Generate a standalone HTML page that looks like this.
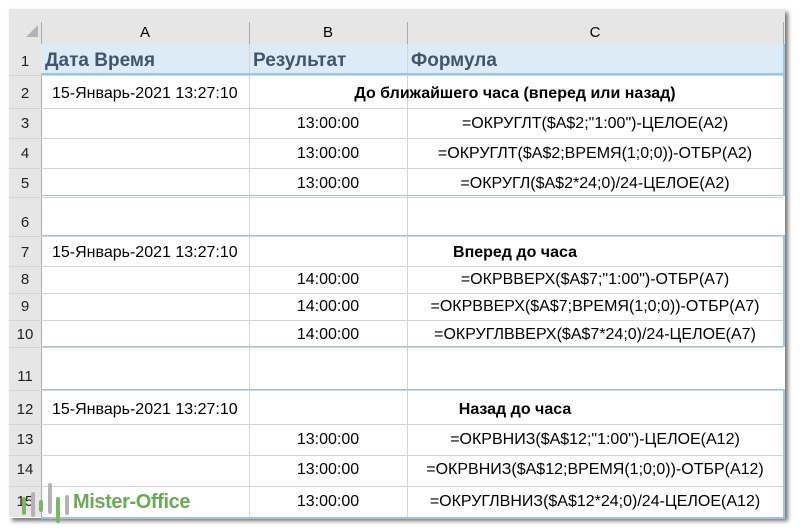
<!DOCTYPE html>
<html><head><meta charset="utf-8"><style>
body{margin:0;width:800px;height:531px;background:#fff;position:relative;overflow:hidden;font-family:"Liberation Sans",sans-serif;}
.frame{position:absolute;left:9px;top:9px;width:776px;height:509px;background:#fff;box-shadow:3px 3px 4px rgba(0,0,0,.55);}
.a{position:absolute;}
.hl{position:absolute;left:9px;width:774px;height:1px;background:#d4d4d4;}
.vl{position:absolute;top:44px;height:473px;width:1px;background:#d4d4d4;}
.rn{position:absolute;left:9px;width:32px;text-align:center;font-size:15px;color:#222;}
.t{position:absolute;font-size:16px;color:#000;white-space:nowrap;}
.c{text-align:center;}
.b{font-weight:bold;}
.blue{position:absolute;background:#9dc3e6;}
</style></head><body>
<div class="frame"></div>
<div class="a" style="left:9px;top:9px;width:776px;height:35px;background:#e6e6e6;border-bottom:1px solid #ababab"></div>
<div class="a" style="left:9px;top:44px;width:32px;height:473px;background:#e6e6e6;border-right:1px solid #ababab"></div>
<div class="a" style="left:26px;top:25px;width:0;height:0;border-left:12px solid transparent;border-bottom:12px solid #b4b4b4"></div>
<div class="a" style="left:41px;top:22px;width:1px;height:22px;background:#ababab"></div>
<div class="a" style="left:249px;top:22px;width:1px;height:22px;background:#ababab"></div>
<div class="a" style="left:407px;top:22px;width:1px;height:22px;background:#ababab"></div>
<div class="a" style="left:783px;top:22px;width:1px;height:22px;background:#ababab"></div>
<div class="t c" style="left:41px;width:208px;top:24px;font-size:15px">A</div>
<div class="t c" style="left:249px;width:158px;top:24px;font-size:15px">B</div>
<div class="t c" style="left:407px;width:376px;top:24px;font-size:15px">C</div>
<div class="a" style="left:41px;top:44px;width:742px;height:29px;background:#ddebf7"></div>
<div class="vl" style="left:249px"></div>
<div class="vl" style="left:407px"></div>
<div class="hl" style="top:75px"></div>
<div class="hl" style="top:108px"></div><div class="hl" style="top:138px"></div><div class="hl" style="top:168px"></div>
<div class="hl" style="top:197px"></div><div class="hl" style="top:236px"></div><div class="hl" style="top:266px"></div><div class="hl" style="top:293px"></div>
<div class="hl" style="top:320px"></div><div class="hl" style="top:347px"></div><div class="hl" style="top:390px"></div><div class="hl" style="top:424px"></div>
<div class="hl" style="top:455px"></div><div class="hl" style="top:486px"></div>
<div class="blue" style="left:41px;top:73px;width:742px;height:2px"></div>
<div class="blue" style="left:41px;top:195px;width:742px;height:1px"></div>
<div class="blue" style="left:783px;top:44px;width:2px;height:152px"></div>
<div class="blue" style="left:41px;top:235px;width:742px;height:1px"></div>
<div class="blue" style="left:41px;top:346px;width:742px;height:1px"></div>
<div class="blue" style="left:783px;top:235px;width:2px;height:112px"></div>
<div class="blue" style="left:41px;top:389px;width:742px;height:1px"></div>
<div class="blue" style="left:41px;top:517px;width:742px;height:2px"></div>
<div class="blue" style="left:783px;top:389px;width:2px;height:130px"></div>
<div class="rn" style="top:53px">1</div><div class="rn" style="top:85px">2</div><div class="rn" style="top:115px">3</div>
<div class="rn" style="top:145px">4</div><div class="rn" style="top:175px">5</div><div class="rn" style="top:214px">6</div>
<div class="rn" style="top:244px">7</div><div class="rn" style="top:271px">8</div><div class="rn" style="top:298px">9</div>
<div class="rn" style="top:326px">10</div><div class="rn" style="top:368px">11</div><div class="rn" style="top:401px">12</div>
<div class="rn" style="top:431px">13</div><div class="rn" style="top:461px">14</div><div class="rn" style="top:493px">15</div>
<div class="t b" style="left:45px;top:50px;font-size:19px;color:#44546a">Дата Время</div>
<div class="t b" style="left:253px;top:50px;font-size:19px;color:#44546a">Результат</div>
<div class="t b" style="left:411px;top:50px;font-size:19px;color:#44546a">Формула</div>
<div class="t" style="left:52px;top:85px">15-Январь-2021 13:27:10</div>
<div class="t b c" style="left:300px;width:430px;top:85px">До ближайшего часа (вперед или назад)</div>
<div class="t c" style="left:249px;width:158px;top:115px">13:00:00</div>
<div class="t c" style="left:407px;width:376px;top:115px">=ОКРУГЛТ($A$2;"1:00")-ЦЕЛОЕ(A2)</div>
<div class="t c" style="left:249px;width:158px;top:145px">13:00:00</div>
<div class="t c" style="left:407px;width:376px;top:145px">=ОКРУГЛТ($A$2;ВРЕМЯ(1;0;0))-ОТБР(A2)</div>
<div class="t c" style="left:249px;width:158px;top:175px">13:00:00</div>
<div class="t c" style="left:407px;width:376px;top:175px">=ОКРУГЛ($A$2*24;0)/24-ЦЕЛОЕ(A2)</div>
<div class="t" style="left:52px;top:244px">15-Январь-2021 13:27:10</div>
<div class="t b c" style="left:300px;width:430px;top:244px">Вперед до часа</div>
<div class="t c" style="left:249px;width:158px;top:271px">14:00:00</div>
<div class="t c" style="left:407px;width:376px;top:271px">=ОКРВВЕРХ($A$7;"1:00")-ОТБР(A7)</div>
<div class="t c" style="left:249px;width:158px;top:298px">14:00:00</div>
<div class="t c" style="left:407px;width:376px;top:298px">=ОКРВВЕРХ($A$7;ВРЕМЯ(1;0;0))-ОТБР(A7)</div>
<div class="t c" style="left:249px;width:158px;top:326px">14:00:00</div>
<div class="t c" style="left:407px;width:376px;top:326px">=ОКРУГЛВВЕРХ($A$7*24;0)/24-ЦЕЛОЕ(A7)</div>
<div class="t" style="left:52px;top:401px">15-Январь-2021 13:27:10</div>
<div class="t b c" style="left:300px;width:430px;top:401px">Назад до часа</div>
<div class="t c" style="left:249px;width:158px;top:431px">13:00:00</div>
<div class="t c" style="left:407px;width:376px;top:431px">=ОКРВНИЗ($A$12;"1:00")-ЦЕЛОЕ(A12)</div>
<div class="t c" style="left:249px;width:158px;top:461px">13:00:00</div>
<div class="t c" style="left:407px;width:376px;top:461px">=ОКРВНИЗ($A$12;ВРЕМЯ(1;0;0))-ОТБР(A12)</div>
<div class="t c" style="left:249px;width:158px;top:493px">13:00:00</div>
<div class="t c" style="left:407px;width:376px;top:493px">=ОКРУГЛВНИЗ($A$12*24;0)/24-ЦЕЛОЕ(A12)</div>
<svg class="a" style="left:20px;top:480px" width="52" height="44">
<g stroke-linecap="round" stroke-width="4">
<line x1="4" y1="19" x2="4" y2="33" stroke="#7cb665"/>
<line x1="13" y1="14" x2="13" y2="35" stroke="#b3b3b3"/>
<line x1="21" y1="22" x2="21" y2="30" stroke="#7cb665"/>
<line x1="30" y1="5" x2="30" y2="32" stroke="#b3b3b3"/>
<line x1="38" y1="19" x2="38" y2="41" stroke="#7cb665"/>
<line x1="47" y1="17" x2="47" y2="33" stroke="#b3b3b3"/>
</g></svg>
<div class="t b" style="left:73px;top:491px;font-size:20px;color:#6aaa55;letter-spacing:-0.4px">Mister-Office</div>
</body></html>
